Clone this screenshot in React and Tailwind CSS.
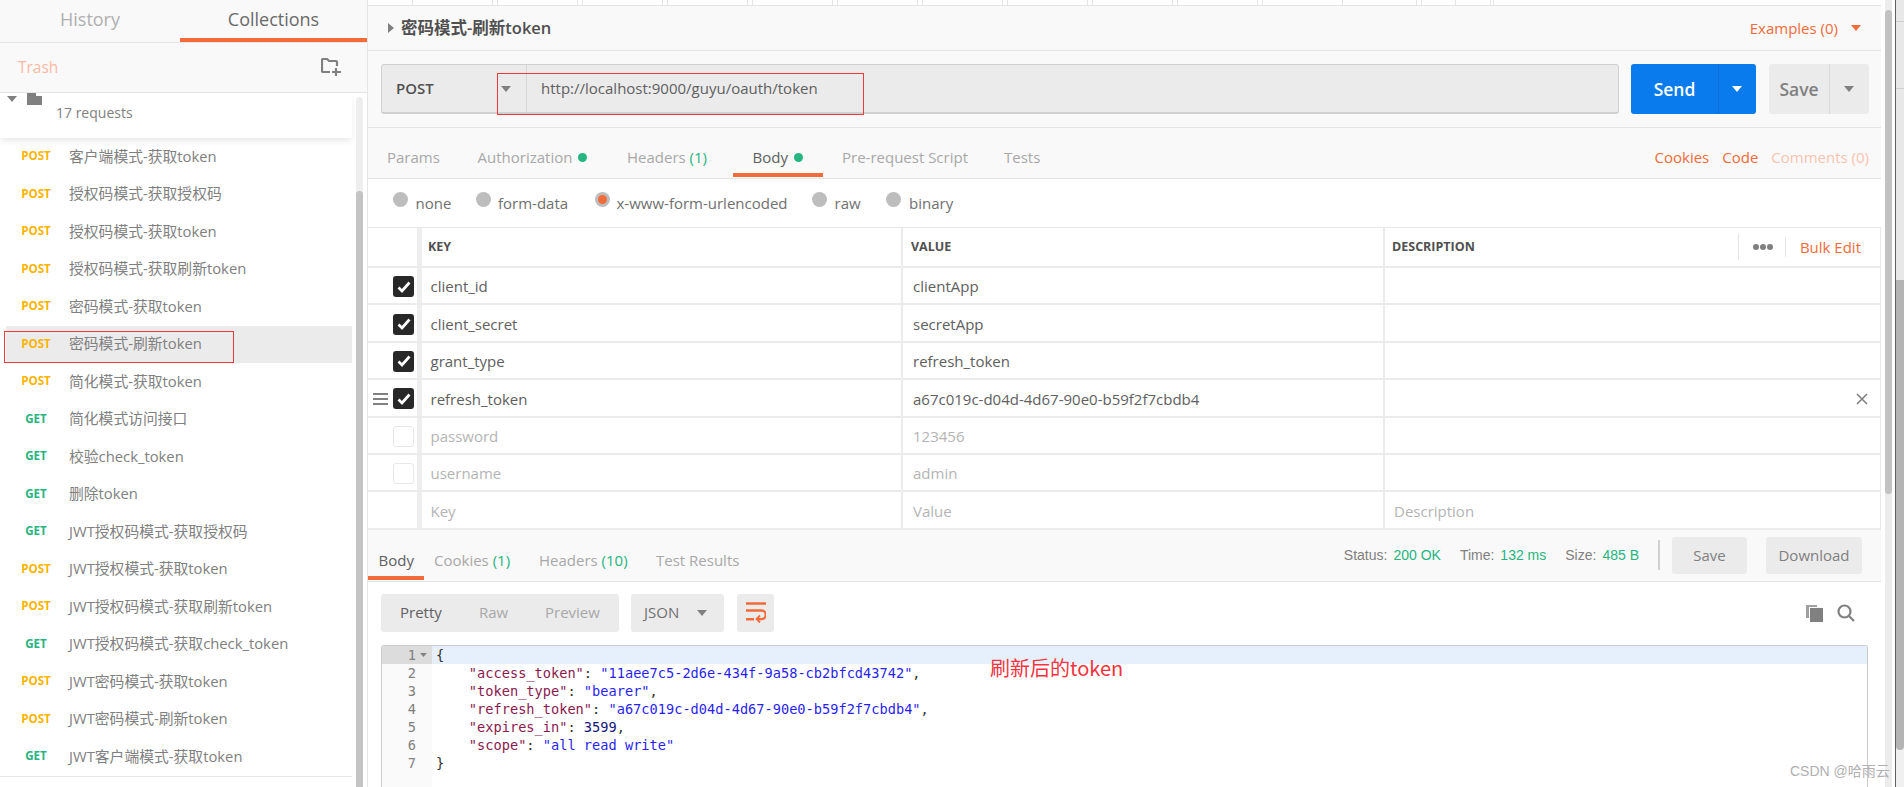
import React from "react";

const requests = [
  ["POST", "客户端模式-获取token"],
  ["POST", "授权码模式-获取授权码"],
  ["POST", "授权码模式-获取token"],
  ["POST", "授权码模式-获取刷新token"],
  ["POST", "密码模式-获取token"],
  ["POST", "密码模式-刷新token", true],
  ["POST", "简化模式-获取token"],
  ["GET", "简化模式访问接口"],
  ["GET", "校验check_token"],
  ["GET", "删除token"],
  ["GET", "JWT授权码模式-获取授权码"],
  ["POST", "JWT授权模式-获取token"],
  ["POST", "JWT授权码模式-获取刷新token"],
  ["GET", "JWT授权码模式-获取check_token"],
  ["POST", "JWT密码模式-获取token"],
  ["POST", "JWT密码模式-刷新token"],
  ["GET", "JWT客户端模式-获取token"],
];

const params = [
  ["client_id", "clientApp", true],
  ["client_secret", "secretApp", true],
  ["grant_type", "refresh_token", true],
  ["refresh_token", "a67c019c-d04d-4d67-90e0-b59f2f7cbdb4", true, true],
  ["password", "123456", false],
  ["username", "admin", false],
];

function Tri({ className }) {
  return (
    <svg width="10" height="6" viewBox="0 0 10 6" className={className}>
      <path d="M0 0h10L5 6z" fill="currentColor" />
    </svg>
  );
}

function Check() {
  return (
    <span className="w-[21px] h-[21px] rounded-[3px] bg-[#282828] flex items-center justify-center">
      <svg width="14" height="12" viewBox="0 0 14 12">
        <path d="M1.5 6.5 5 10l7.5-8.5" fill="none" stroke="#fff" strokeWidth="2.7" />
      </svg>
    </span>
  );
}

function Sidebar() {
  return (
    <div className="w-[368px] shrink-0 h-full border-r border-[#e5e5e5] flex flex-col bg-white">
      <div className="h-[43px] shrink-0 flex bg-[#f9f9f9] border-b border-[#e5e5e5]">
        <div className="w-[180px] h-[42px] pb-[4px] flex items-center justify-center text-[18px] text-[#b0b0b0]">
          History
        </div>
        <div className="w-[187px] h-[42px] border-b-4 border-[#f26b3a] flex items-center justify-center text-[18px] text-[#6a6a6a]">
          Collections
        </div>
      </div>
      <div className="h-[50px] shrink-0 flex items-center justify-between pl-[18px] pr-[25px] bg-[#f9f9f9] border-b border-[#e5e5e5]">
        <span className="text-[15.5px] text-[#fbb9a5]">Trash</span>
        <svg width="21" height="19" viewBox="0 0 21 19" fill="none" stroke="#808080" strokeWidth="2.2">
          <path d="M9 14H2a1 1 0 0 1-1-1V2a1 1 0 0 1 1-1h4l2 2h7a1 1 0 0 1 1 1v4" />
          <path d="M15 10v8M11 14h9" />
        </svg>
      </div>
      <div className="flex-1 flex min-h-0">
        <div className="w-[352px] shrink-0 flex flex-col">
          <div className="h-[45px] shrink-0 shadow-[0_4px_6px_-1px_rgba(0,0,0,0.09)] flex">
            <Tri className="text-[#808080] ml-[7px] mt-[3px]" />
            <svg width="15" height="12" viewBox="0 0 15 12" className="ml-[10px]">
              <path d="M0 0h9v3h6v9H0z" fill="#808080" />
            </svg>
            <span className="ml-[14px] mt-[10px] text-[14px] leading-[20px] text-[#808080]">17 requests</span>
          </div>
          <div className="flex flex-col">
            {requests.map(([m, label, sel]) => (
              <div
                key={label}
                className={
                  "h-[37.5px] shrink-0 flex items-center pb-[1.5px] " + (sel ? "bg-[#ebebeb] ml-[6px]" : "")
                }
              >
                <span
                  className={
                    "w-[30px] text-center text-[11.6px] font-bold " +
                    (m === "POST" ? "text-[#ffb400] " : "text-[#26b47f] ") +
                    (sel ? "ml-[15px]" : "ml-[21px]")
                  }
                >
                  {m}
                </span>
                <span className="ml-[18px] text-[14.8px] text-[#808080] whitespace-nowrap">{label}</span>
              </div>
            ))}
          </div>
          <div className="h-px bg-[#e5e5e5]" />
        </div>
        <div className="ml-[4px] mt-[4px] w-[7px] flex flex-col">
          <div className="h-[94px] shrink-0 bg-[#eeeeee] rounded-t-[4px]" />
          <div className="flex-1 bg-[#c4c4c4] rounded-t-[3px]" />
        </div>
      </div>
    </div>
  );
}

function TopTicks() {
  const cells = [0, 1, 2, 3, 4, 5, 6, 7, 8, 9, 10];
  return (
    <div className="h-[6px] shrink-0 bg-white border-b border-[#e5e5e5] flex pl-[40px]">
      {cells.map((c) => (
        <React.Fragment key={c}>
          <div className="w-[5px] border-r border-[#e5e5e5]" />
          <div className="w-[80px] border-r border-[#e5e5e5]" />
        </React.Fragment>
      ))}
      <div className="w-[74px] border-r border-[#e5e5e5]" />
      <div className="w-[5px] border-r border-[#e5e5e5]" />
      <div className="w-[34px] border-r border-[#e5e5e5]" />
      <div className="w-[35px] border-r border-[#e5e5e5]" />
      <div className="w-[3px] border-r border-[#e5e5e5]" />
    </div>
  );
}

function Dot() {
  return <span className="inline-block w-[9px] h-[9px] rounded-full bg-[#26b47f] ml-[6px] relative -top-[1px]" />;
}

function RequestBar() {
  return (
    <>
      <div className="h-[45px] shrink-0 bg-[#f9f9f9] border-b border-[#e5e5e5] flex items-center pr-[20px]">
        <svg width="6" height="10" viewBox="0 0 6 10" className="ml-[20px] text-[#808080]">
          <path d="M0 0v10l6-5z" fill="currentColor" />
        </svg>
        <span className="ml-[7px] text-[16.5px] font-semibold text-[#505050]">密码模式-刷新token</span>
        <span className="ml-auto text-[15px] text-[#f26b3a]">Examples (0)</span>
        <Tri className="ml-[13px] text-[#f26b3a]" />
      </div>
      <div className="h-[77px] shrink-0 bg-[#f9f9f9] border-b border-[#e5e5e5] flex items-start pt-[13px] pl-[13px]">
        <div className="w-[1238px] h-[50px] rounded-[3px] bg-[#ebebeb] border border-[#d0d0d0] border-b-2 flex items-center text-[#505050]">
          <span className="ml-[14px] w-[105px] text-[15px] font-semibold">POST</span>
          <Tri className="text-[#808080]" />
          <span className="ml-[15px] w-px h-full bg-[#d8d8d8]" />
          <span className="ml-[14px] text-[15px] text-[#606060]">http://localhost:9000/guyu/oauth/token</span>
        </div>
        <div className="ml-[12px] w-[125px] h-[50px] rounded-[3px] bg-[#097bed] flex items-center text-white">
          <span className="w-[88px] text-center text-[17.5px] font-semibold border-r border-[#0a6fd4] leading-[50px]">Send</span>
          <Tri className="ml-[13px] text-white" />
        </div>
        <div className="ml-[13px] w-[100px] h-[50px] rounded-[3px] bg-[#ebebeb] flex items-center text-[#808080]">
          <span className="w-[61px] text-center text-[17.5px] font-semibold border-r border-[#d8d8d8] leading-[50px]">Save</span>
          <Tri className="ml-[14px] text-[#808080]" />
        </div>
      </div>
    </>
  );
}

function Tabs() {
  return (
    <div className="h-[51px] shrink-0 bg-[#f9f9f9] border-b border-[#e5e5e5] flex items-start pl-[19px] text-[15px] text-[#a8a8a8] leading-[20px]">
      <div className="w-[90.5px] h-[49px] flex items-end pb-[10px]">Params</div>
      <div className="w-[149.5px] h-[49px] flex items-end pb-[10px]">
        <span>Authorization<Dot /></span>
      </div>
      <div className="w-[106px] h-[49px] flex items-end pb-[10px] whitespace-nowrap">
        <span>Headers <span className="text-[#26b47f]">(1)</span></span>
      </div>
      <div className="w-[90px] h-[49px] flex items-end pb-[6px] pl-[19.5px] border-b-4 border-[#f26b3a] text-[#606060]">
        <span>Body<Dot /></span>
      </div>
      <div className="w-[181px] pl-[19px] h-[49px] flex items-end pb-[10px] whitespace-nowrap">Pre-request Script</div>
      <div className="h-[49px] flex items-end pb-[10px]">Tests</div>
      <div className="ml-auto h-[49px] flex items-end pb-[10px] pr-[12px]">
        <span className="text-[#f26b3a]">Cookies</span>
        <span className="ml-[13px] text-[#f26b3a]">Code</span>
        <span className="ml-[13px] text-[#fbc4b0]">Comments (0)</span>
      </div>
    </div>
  );
}

function Radio({ on, label, className }) {
  return (
    <div className={"flex items-center " + className}>
      <span className="w-[15px] h-[15px] rounded-full bg-[#bdbdbd] flex items-center justify-center relative -top-[4px]">
        {on && <span className="w-[9px] h-[9px] rounded-full bg-[#f26b3a]" />}
      </span>
      <span className="text-[15px] text-[#707070]">{label}</span>
    </div>
  );
}

function RadioRow() {
  return (
    <div className="h-[48px] shrink-0 bg-white flex items-center">
      <Radio label="none" className="w-[108px] pl-[24.5px] gap-[8px]" />
      <Radio label="form-data" className="w-[118.5px] gap-[7px]" />
      <Radio on label="x-www-form-urlencoded" className="w-[217px] gap-[7px]" />
      <Radio label="raw" className="w-[74.5px] gap-[8px]" />
      <Radio label="binary" className="gap-[8px]" />
    </div>
  );
}

function ParamRow({ k, v, checked, showEmpty, hover, placeholder }) {
  const color = placeholder || !checked ? "text-[#b4b4b4]" : "text-[#606060]";
  return (
    <div className="h-[37.4px] shrink-0 flex border-b-2 border-[#ebebeb] border-r border-r-[#e8e8e8]">
      <div className="w-[54px] shrink-0 border-r-[5px] border-[#eeeeee] flex items-center justify-end pr-[3px] pt-[2px] gap-[5px]">
        {hover && (
          <svg width="15" height="12" viewBox="0 0 15 12" fill="#808080">
            <path d="M0 0h15v2H0zM0 5h15v2H0zM0 10h15v2H0z" />
          </svg>
        )}
        {checked ? (
          <Check />
        ) : showEmpty ? (
          <span className="w-[21px] h-[21px] rounded-[3px] border border-[#e8e8e8]" />
        ) : null}
      </div>
      <div className={"w-[481px] shrink-0 border-r-2 border-[#ebebeb] pl-[8.5px] pt-[2px] flex items-center text-[15px] " + color}>{k}</div>
      <div className={"w-[482px] shrink-0 border-r-2 border-[#ebebeb] pl-[10px] pt-[2px] flex items-center text-[15px] " + color}>{v}</div>
      <div className="flex-1 pl-[9px] pt-[2px] flex items-center text-[15px] text-[#b4b4b4]">
        {placeholder ? "Description" : ""}
        {hover && (
          <svg width="12" height="12" viewBox="0 0 12 12" className="ml-auto mr-[12px]" stroke="#808080" strokeWidth="1.6">
            <path d="M1 1l10 10M11 1 1 11" />
          </svg>
        )}
      </div>
    </div>
  );
}

function ParamTable() {
  return (
    <div className="shrink-0 flex flex-col border-t border-[#e8e8e8]">
      <div className="h-[40px] shrink-0 flex border-b-2 border-[#ebebeb] border-r border-r-[#e8e8e8] text-[12.5px] font-bold text-[#505050]">
        <div className="w-[54px] shrink-0 border-r-[5px] border-[#eeeeee]" />
        <div className="w-[481px] shrink-0 border-r-2 border-[#ebebeb] pl-[6px] flex items-center">KEY</div>
        <div className="w-[482px] shrink-0 border-r-2 border-[#ebebeb] pl-[8px] flex items-center">VALUE</div>
        <div className="flex-1 pl-[7px] flex items-center">
          <span>DESCRIPTION</span>
          <span className="ml-auto w-px h-[26px] bg-[#e5e5e5]" />
          <span className="ml-[14px] flex gap-[1px]">
            <i className="w-[6px] h-[6px] rounded-full bg-[#808080]" />
            <i className="w-[6px] h-[6px] rounded-full bg-[#808080]" />
            <i className="w-[6px] h-[6px] rounded-full bg-[#808080]" />
          </span>
          <span className="ml-[12px] w-px h-[20px] bg-[#e5e5e5]" />
          <span className="ml-[14px] mr-[19px] text-[15px] font-normal text-[#f26b3a]">Bulk Edit</span>
        </div>
      </div>
      {params.map(([k, v, c, h]) => (
        <ParamRow key={k} k={k} v={v} checked={c} hover={h} showEmpty />
      ))}
      <ParamRow k="Key" v="Value" placeholder />
    </div>
  );
}

function ResponseBar() {
  return (
    <div className="h-[52px] shrink-0 bg-[#f9f9f9] border-b border-[#e5e5e5] flex items-start text-[15px] text-[#a8a8a8] leading-[20px]">
      <div className="w-[56px] h-[50px] border-b-4 border-[#f26b3a] flex items-end pb-[6px] pl-[10.5px] text-[#606060]">Body</div>
      <div className="ml-[10px] w-[105px] h-[50px] flex items-end pb-[10px] whitespace-nowrap">
        <span>Cookies <span className="text-[#26b47f]">(1)</span></span>
      </div>
      <div className="w-[117px] h-[50px] flex items-end pb-[10px] whitespace-nowrap">
        <span>Headers <span className="text-[#26b47f]">(10)</span></span>
      </div>
      <div className="h-[50px] flex items-end pb-[10px]">Test Results</div>
      <div className="ml-auto flex items-center h-[51px] pr-[19px] font-['Liberation_Sans',sans-serif] text-[14px] text-[#808080]">
        <span>Status:</span>
        <span className="ml-[6px] text-[#26b47f]">200 OK</span>
        <span className="ml-[19px]">Time:</span>
        <span className="ml-[6px] text-[#26b47f]">132 ms</span>
        <span className="ml-[19px]">Size:</span>
        <span className="ml-[6px] text-[#26b47f]">485 B</span>
        <span className="ml-[19px] w-[2px] h-[30px] bg-[#d0d0d0]" />
        <span className="ml-[12px] w-[75px] h-[37px] rounded-[3px] bg-[#ebebeb] flex items-center justify-center font-['Open_Sans',sans-serif] text-[15px]">Save</span>
        <span className="ml-[19px] w-[96px] h-[37px] rounded-[3px] bg-[#ebebeb] flex items-center justify-center font-['Open_Sans',sans-serif] text-[15px]">Download</span>
      </div>
    </div>
  );
}

function ViewRow() {
  return (
    <div className="h-[63px] shrink-0 bg-white flex items-start pt-[12px] pl-[13px] text-[15px]">
      <div className="w-[238px] h-[38px] rounded-[3px] bg-[#ebebeb] flex items-center text-[#a8a8a8]">
        <span className="ml-[19px] w-[79px] text-[#606060]">Pretty</span>
        <span className="w-[66px]">Raw</span>
        <span>Preview</span>
      </div>
      <div className="ml-[12px] w-[93px] h-[38px] rounded-[3px] bg-[#ebebeb] flex items-center text-[#707070]">
        <span className="ml-[13px] w-[53px]">JSON</span>
        <Tri className="text-[#808080]" />
      </div>
      <div className="ml-[13px] w-[37px] h-[38px] rounded-[3px] bg-[#ebebeb] flex items-center justify-center">
        <svg width="20" height="21" viewBox="0 0 20 21" fill="none" stroke="#f26b3a" strokeWidth="2.4">
          <path d="M0 1.5h20M0 8.5h15.5a4.3 4.3 0 0 1 0 8.6H11M0 17.2h8" />
          <path d="M14 13.5 10.5 17l3.5 3.5" strokeWidth="1.8" />
        </svg>
      </div>
      <div className="ml-auto mr-[26px] mt-[10px] flex items-center gap-[14px]">
        <svg width="18" height="18" viewBox="0 0 18 18">
          <path d="M1 1h11v2H4v11H1z" fill="#a0a0a0" />
          <path d="M5 4h13v14H5z" fill="#808080" />
        </svg>
        <svg width="18" height="18" viewBox="0 0 18 18" fill="none" stroke="#808080" strokeWidth="2.2">
          <circle cx="7.5" cy="7.5" r="6" />
          <path d="m12 12 5 5" />
        </svg>
      </div>
    </div>
  );
}

const K = ({ children }) => <span className="text-[#8a1a50]">{children}</span>;
const S = ({ children }) => <span className="text-[#2a1ff0]">{children}</span>;

function Editor() {
  const lines = [
    <>{"{"}</>,
    <>{"    "}<K>"access_token"</K>: <S>"11aee7c5-2d6e-434f-9a58-cb2bfcd43742"</S>,</>,
    <>{"    "}<K>"token_type"</K>: <S>"bearer"</S>,</>,
    <>{"    "}<K>"refresh_token"</K>: <S>"a67c019c-d04d-4d67-90e0-b59f2f7cbdb4"</S>,</>,
    <>{"    "}<K>"expires_in"</K>: <span className="text-[#14147a]">3599</span>,</>,
    <>{"    "}<K>"scope"</K>: <S>"all read write"</S></>,
    <>{"}"}</>,
  ];
  return (
    <div className="flex-1 min-h-0 ml-[13px] mr-[13px] border border-[#cccccc] border-b-0 rounded-t-[3px] flex font-['DejaVu_Sans_Mono',monospace] text-[13.65px] leading-[18px] overflow-hidden">
      <div className="w-[50px] shrink-0 bg-[#fafafa] flex flex-col text-[#808080]">
        {lines.map((_, i) => (
          <div key={i} className={"h-[18px] flex items-center " + (i === 0 ? "bg-[#dcdcdc]" : "")}>
            <span className="w-[34px] text-right">{i + 1}</span>
            {i === 0 && <Tri className="ml-[4px] w-[7px] h-[4px] text-[#808080]" />}
          </div>
        ))}
      </div>
      <div className="flex-1 flex flex-col whitespace-pre text-[#303030]">
        {lines.map((l, i) => (
          <div key={i} className={"h-[18px] pl-[4px] " + (i === 0 ? "bg-[#e5f0fc]" : "")}>
            {l}
          </div>
        ))}
      </div>
    </div>
  );
}

function RightStrip() {
  return (
    <div className="w-[23px] shrink-0 h-full flex bg-white">
      <div className="ml-[4px] w-[7px] h-full bg-[#ececec] flex flex-col">
        <div className="mt-[10px] h-[484px] bg-[#c2c2c2] rounded-[4px]" />
      </div>
      <div className="ml-[3px] w-px h-full bg-[#606060]" />
      <div className="w-[8px] h-full flex flex-col bg-[#f0f0f0]">
        <div className="h-[22px] border-b border-[#cfcfcf] bg-[#e8e8e8]" />
        <div className="h-[67px] border-b border-[#cfcfcf] bg-[#e8e8e8]" />
        <div className="h-[191px] bg-[#e8e8e8]" />
        <div className="h-[470px] bg-[#b4b4b4] rounded-b-[5px]" />
      </div>
    </div>
  );
}

export default function App() {
  return (
    <div className="relative w-[1904px] h-[787px] overflow-hidden flex bg-white font-['Open_Sans','Noto_Sans_CJK_SC',sans-serif]">
      <Sidebar />
      <div className="w-[1513px] shrink-0 h-full flex flex-col">
        <TopTicks />
        <RequestBar />
        <Tabs />
        <RadioRow />
        <ParamTable />
        <ResponseBar />
        <ViewRow />
        <Editor />
      </div>
      <RightStrip />

      {/* annotations drawn over the screenshot */}
      <div className="absolute left-[497px] top-[73px] w-[367px] h-[42px] border border-[#f03a3a]" />
      <div className="absolute left-[4px] top-[331px] w-[230px] h-[32px] border border-[#f03a3a]" />
      <div className="absolute left-[990px] top-[654px] text-[20px] leading-[28px] text-[#f5333f] font-['Noto_Sans_CJK_SC',sans-serif]">
        刷新后的token
      </div>
      <div className="absolute left-[1790px] top-[762px] text-[14px] leading-[18px] text-[#b0b0b0] font-['Liberation_Sans','Noto_Sans_CJK_SC',sans-serif]">
        CSDN @哈雨云
      </div>
    </div>
  );
}
